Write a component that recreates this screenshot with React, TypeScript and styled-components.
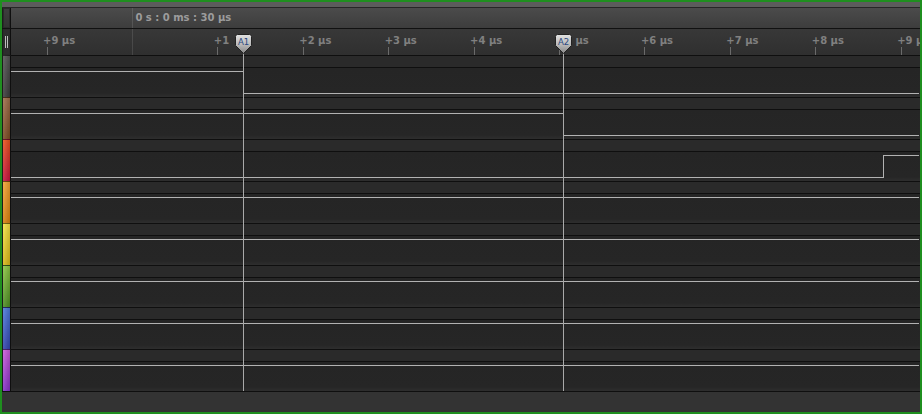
import React from 'react'
import styled, { createGlobalStyle } from 'styled-components'

const GlobalStyle = createGlobalStyle`
  html, body {
    margin: 0;
    padding: 0;
    background: #1f8f1f;
  }
  body {
    font-family: "DejaVu Sans", "Liberation Sans", sans-serif;
  }
`

// time axis: tick i sits at TICK0 + STEP * i (px from the left of the plot lane)
const TICK0 = 35.5
const STEP = 85.42
const LANE_W = 908

// labels partly hidden by a cursor badge keep only the part that shows
type TickDef = { label: string | null; shift?: number }
const ticks: TickDef[] = [
  { label: '+9 µs' },
  { label: null },
  { label: '+1' },
  { label: '+2 µs' },
  { label: '+3 µs' },
  { label: '+4 µs' },
  { label: 'µs', shift: 20 },
  { label: '+6 µs' },
  { label: '+7 µs' },
  { label: '+8 µs' },
  { label: '+9 µs' },
]

type Channel = { top: string; bottom: string; high: boolean; edges: number[] }

const channels: Channel[] = [
  { top: '#535353', bottom: '#3a3a3a', high: true, edges: [232] },
  { top: '#9e6e4a', bottom: '#7a4a22', high: true, edges: [552] },
  { top: '#ea521c', bottom: '#c6103e', high: false, edges: [872] },
  { top: '#f2a432', bottom: '#d8800e', high: true, edges: [] },
  { top: '#f4e242', bottom: '#d8b616', high: true, edges: [] },
  { top: '#8ac642', bottom: '#4c8c22', high: true, edges: [] },
  { top: '#4c7ada', bottom: '#3244ae', high: true, edges: [] },
  { top: '#ca5ada', bottom: '#8430c6', high: true, edges: [] },
]

const cursors = [
  { name: 'A1', x: 232 },
  { name: 'A2', x: 552 },
]

const HIGH_Y = 3.5
const LOW_Y = 25.5

const wavePoints = (high: boolean, edges: number[]) => {
  let level = high
  let pts = `0,${level ? HIGH_Y : LOW_Y}`
  edges.forEach((e) => {
    const x = e + 0.5
    pts += ` ${x},${level ? HIGH_Y : LOW_Y}`
    level = !level
    pts += ` ${x},${level ? HIGH_Y : LOW_Y}`
  })
  pts += ` ${LANE_W},${level ? HIGH_Y : LOW_Y}`
  return pts
}

const App = () => {
  return (
    <>
      <GlobalStyle />
      <Frame>
        <TopStrip />
        <HeaderRow>
          <SideBox />
          <HeaderBar>
            <MajorLine style={{ left: TICK0 + STEP }} />
            <TimeText style={{ left: TICK0 + STEP + 3.5 }}>0 s : 0 ms : 30 µs</TimeText>
          </HeaderBar>
        </HeaderRow>
        <Plot>
          <RulerRow>
            <SideGrip>
              <Grip />
            </SideGrip>
            <Ruler>
              {ticks.map((t, i) => {
                const x = TICK0 + STEP * i
                return t.label === null ? (
                  <MajorLine key={i} style={{ left: x }} />
                ) : (
                  <React.Fragment key={i}>
                    <TickLabel style={{ left: x - 3.5 + (t.shift ?? 0) }}>{t.label}</TickLabel>
                    <Tick style={{ left: x }} />
                  </React.Fragment>
                )
              })}
            </Ruler>
          </RulerRow>
          {channels.map((ch, i) => (
            <ChannelRow key={i}>
              <Strip $top={ch.top} $bottom={ch.bottom} />
              <Lane>
                <LaneTop />
                <LaneMain>
                  <svg width={LANE_W} height={29} shapeRendering="crispEdges">
                    <polyline
                      points={wavePoints(ch.high, ch.edges)}
                      fill="none"
                      stroke="#b2b2b2"
                      strokeWidth={1}
                    />
                  </svg>
                </LaneMain>
              </Lane>
            </ChannelRow>
          ))}
          {cursors.map((c) => (
            <Cursor key={c.name} style={{ left: 9 + c.x - 8 }}>
              <svg width={17} height={20}>
                <defs>
                  <linearGradient id={`badge-${c.name}`} x1="0" y1="0" x2="0" y2="1">
                    <stop offset="0" stopColor="#e2e2e2" />
                    <stop offset="0.55" stopColor="#b8b8b8" />
                    <stop offset="1" stopColor="#858585" />
                  </linearGradient>
                </defs>
                <path
                  d="M2.5 0.5 H14.5 Q16.5 0.5 16.5 2.5 V11.5 L8.5 19.5 L0.5 11.5 V2.5 Q0.5 0.5 2.5 0.5 Z"
                  fill={`url(#badge-${c.name})`}
                  stroke="#222222"
                  strokeWidth={1}
                />
                <text
                  x={8.5}
                  y={10.5}
                  textAnchor="middle"
                  fontSize={8.5}
                  fontFamily='"DejaVu Sans", sans-serif'
                  fill="#2a4880"
                >
                  {c.name}
                </text>
              </svg>
              <CursorLine />
            </Cursor>
          ))}
        </Plot>
        <BottomBar />
      </Frame>
    </>
  )
}

export default App

const Frame = styled.div`
  width: 922px;
  height: 414px;
  box-sizing: border-box;
  border: 2px solid #1f8f1f;
  background: #333333;
  display: flex;
  flex-direction: column;
  overflow: hidden;
`

const TopStrip = styled.div`
  height: 5px;
  background: #5c5c5c;
  border-bottom: 1px solid #262626;
  flex-shrink: 0;
`

const HeaderRow = styled.div`
  height: 20px;
  display: flex;
  border-bottom: 1px solid #111111;
  flex-shrink: 0;
`

const SideBox = styled.div`
  width: 9px;
  box-sizing: border-box;
  border-left: 1px solid #1c1c1c;
  border-right: 1px solid #0f0f0f;
  background: linear-gradient(to bottom, #3e3e3e, #323232);
  box-shadow: inset 0 0 0 1px #2a2a2a;
`

const HeaderBar = styled.div`
  flex: 1;
  position: relative;
  background: linear-gradient(to bottom, #4b4b4b, #3d3d3d);
`

const TimeText = styled.div`
  position: absolute;
  top: 0;
  font-size: 10px;
  font-weight: bold;
  line-height: 20px;
  color: #9c9c9c;
  white-space: nowrap;
`

const MajorLine = styled.div`
  position: absolute;
  top: 0;
  bottom: 0;
  width: 1px;
  background: rgba(255, 255, 255, 0.11);
`

const Plot = styled.div`
  position: relative;
  display: flex;
  flex-direction: column;
  flex-shrink: 0;
`

const RulerRow = styled.div`
  height: 26px;
  display: flex;
`

const SideGrip = styled(SideBox)`
  background: #2d2d2d;
  display: flex;
  justify-content: center;
  align-items: center;
`

const Grip = styled.div`
  width: 1px;
  height: 12px;
  border-left: 1px solid #bdbdbd;
  border-right: 1px solid #bdbdbd;
`

const Ruler = styled.div`
  flex: 1;
  position: relative;
  overflow: hidden;
  background: linear-gradient(to bottom, #383838, #2f2f2f);
`

const TickLabel = styled.div`
  position: absolute;
  top: 6px;
  font-size: 10px;
  font-weight: bold;
  line-height: 12px;
  color: #808080;
  white-space: nowrap;
`

const Tick = styled.div`
  position: absolute;
  top: 18px;
  height: 8px;
  width: 1px;
  background: #6a6a6a;
`

const ChannelRow = styled.div`
  height: 42px;
  display: flex;
`

const Strip = styled.div<{ $top: string; $bottom: string }>`
  width: 9px;
  box-sizing: border-box;
  border-left: 1px solid #1c1c1c;
  border-right: 1px solid #0f0f0f;
  border-top: 1px solid rgba(0, 0, 0, 0.45);
  background:
    linear-gradient(to right, rgba(255, 255, 255, 0.12), rgba(0, 0, 0, 0.15)),
    linear-gradient(to bottom, ${(p) => p.$top}, ${(p) => p.$bottom});
`

const Lane = styled.div`
  flex: 1;
  display: flex;
  flex-direction: column;
  border-top: 1px solid #0f0f0f;
  overflow: hidden;
`

const LaneTop = styled.div`
  height: 11px;
  background: #2a2a2a;
  border-bottom: 1px solid #0f0f0f;
`

const LaneMain = styled.div`
  height: 29px;
  background: linear-gradient(to bottom, #252525, #262626 86%, #2e2e2e);
  svg {
    display: block;
  }
`

const Cursor = styled.div`
  position: absolute;
  top: 5px;
  bottom: 0;
  width: 17px;
  svg {
    display: block;
    position: relative;
    z-index: 1;
  }
`

const CursorLine = styled.div`
  position: absolute;
  left: 8px;
  top: 19px;
  bottom: 0;
  width: 1px;
  background: #a9a9a9;
`

const BottomBar = styled.div`
  flex: 1;
  border-top: 1px solid #0f0f0f;
  background: #333333;
`
